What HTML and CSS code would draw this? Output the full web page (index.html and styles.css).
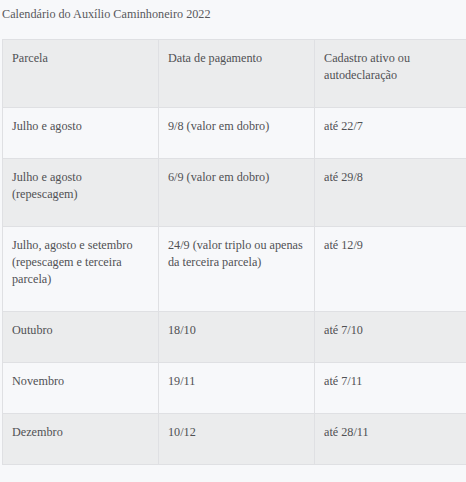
FILE: index.html
```html
<!DOCTYPE html>
<html lang="pt-BR">
<head>
<meta charset="utf-8">
<link rel="stylesheet" href="styles.css">
</head>
<body>
<div class="page">
  <p class="caption">Calendário do Auxílio Caminhoneiro 2022</p>
  <table class="cal">
    <tr class="alt">
      <td>Parcela</td>
      <td>Data de pagamento</td>
      <td>Cadastro ativo ou<br>autodeclaração</td>
    </tr>
    <tr>
      <td>Julho e agosto</td>
      <td>9/8 (valor em dobro)</td>
      <td>até 22/7</td>
    </tr>
    <tr class="alt">
      <td>Julho e agosto<br>(repescagem)</td>
      <td>6/9 (valor em dobro)</td>
      <td>até 29/8</td>
    </tr>
    <tr>
      <td>Julho, agosto e setembro<br>(repescagem e terceira<br>parcela)</td>
      <td>24/9 (valor triplo ou apenas<br>da terceira parcela)</td>
      <td>até 12/9</td>
    </tr>
    <tr class="alt">
      <td>Outubro</td>
      <td>18/10</td>
      <td>até 7/10</td>
    </tr>
    <tr>
      <td>Novembro</td>
      <td>19/11</td>
      <td>até 7/11</td>
    </tr>
    <tr class="alt">
      <td>Dezembro</td>
      <td>10/12</td>
      <td>até 28/11</td>
    </tr>
  </table>
</div>
</body>
</html>
```

FILE: styles.css
```css
html, body {
  margin: 0;
  padding: 0;
  background: #f7f8fa;
}
body {
  width: 466px;
  height: 482px;
  overflow: hidden;
  font-family: "Liberation Serif", "Times New Roman", serif;
  font-size: 12.2px;
  color: #505154;
}
.page {
  padding: 6px 0 0 2px;
}
.caption {
  margin: 0 0 16px 0;
  line-height: 17px;
  color: #58595c;
}
.cal {
  border-collapse: collapse;
  table-layout: fixed;
  width: 468px;
}
.cal td {
  width: 156px;
  vertical-align: top;
  padding: 10px 10px 23px 9px;
  line-height: 17px;
  border: 1px solid #dfe0e3;
  box-sizing: border-box;
}
.cal tr {
  background: #f7f8fa;
}
.cal tr.alt {
  background: #ebeced;
}
```
